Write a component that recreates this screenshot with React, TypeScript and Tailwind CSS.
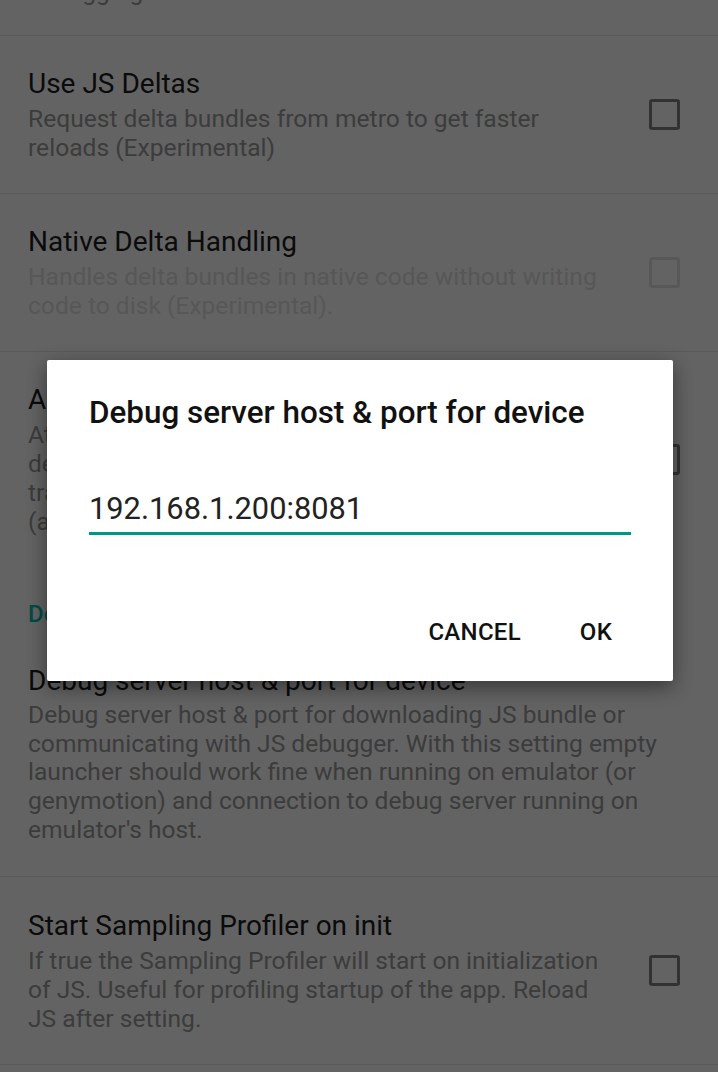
import React from "react";

type PrefProps = {
  title: string;
  summary: React.ReactNode;
  checkbox?: boolean;
  disabled?: boolean;
  divider?: boolean;
  top?: string;
};

const Pref: React.FC<PrefProps> = ({ title, summary, checkbox, disabled, divider = true, top = "pt-[31px]" }) => (
  <div
    className={`flex items-center pl-[28px] ${top} pb-[31px] ${checkbox ? "pr-[38px]" : "pr-[28px]"} ${
      divider ? "border-b border-[#e1e1e1]" : ""
    }`}
  >
    <div className="flex-1 min-w-0">
      <div className="text-[28px] leading-[34px] text-[#1c1c1c]">{title}</div>
      <div
        className={`mt-[3px] text-[24.6px] leading-[29px] ${disabled ? "text-[#d9d9d9]" : "text-[#969696]"}`}
      >
        {summary}
      </div>
    </div>
    {checkbox && (
      <div
        className={`ml-[38px] w-[31px] h-[31px] shrink-0 rounded-[3px] border-[3px] ${
          disabled ? "border-[#dcdcdc]" : "border-[#7d7d7d]"
        }`}
      />
    )}
  </div>
);

export default function App() {
  return (
    <div
      className="relative w-full h-[1072px] overflow-hidden bg-[#f8f8f8]"
      style={{ fontFamily: "Roboto, 'Noto Sans', sans-serif" }}
    >
      {/* tail of the previous preference */}
      <div className="h-[36px] overflow-hidden border-b border-[#e1e1e1] pl-[28px]">
        <p className="-mt-[23px] text-[24.6px] leading-[29px] text-[#969696]">debugging.</p>
      </div>

      <Pref
        title="Use JS Deltas"
        summary="Request delta bundles from metro to get faster reloads (Experimental)"
        checkbox
      />
      <Pref
        title="Native Delta Handling"
        summary="Handles delta bundles in native code without writing code to disk (Experimental)."
        checkbox
        disabled
      />
      <Pref
        title="Animations FPS Summaries"
        summary={
          <>
            At the end of each animation, a Toast with FPS
            <br />
            debug info will be shown. Requires animations
            <br />
            tracking in the native animated module
            <br />
            (applies to the UI thread only).
          </>
        }
        checkbox
        divider={false}
      />

      <div className="pl-[28px] pt-[33px] text-[24px] leading-[28px] font-medium text-[#00bfa5]">Debugging</div>

      <div className="pl-[28px] pr-[28px] pt-[36px] pb-[31px] border-b border-[#e1e1e1]">
        <div className="text-[28px] leading-[34px] text-[#1c1c1c]">Debug server host &amp; port for device</div>
        <div className="mt-[3px] text-[24.6px] leading-[28.7px] text-[#969696]">
          Debug server host &amp; port for downloading JS bundle or communicating with JS debugger. With this
          setting empty launcher should work fine when running on emulator (or genymotion) and connection to debug
          server running on emulator's host.
        </div>
      </div>

      <Pref
        title="Start Sampling Profiler on init"
        summary="If true the Sampling Profiler will start on initialization of JS. Useful for profiling startup of the app. Reload JS after setting."
        checkbox
        top="pt-[32px]"
      />

      {/* scrim */}
      <div className="absolute inset-0 bg-black/60" />

      {/* dialog */}
      <div className="absolute left-[47px] top-[360px] w-[626px] h-[321px] rounded-[2px] bg-white shadow-[0_6px_20px_rgba(0,0,0,0.45)] flex flex-col">
        <div className="pl-[42px] pr-[42px] pt-[35px] text-[31.4px] leading-[36px] font-medium text-[#111111]">
          Debug server host &amp; port for device
        </div>
        <div className="mx-[42px] mt-[60px] pb-[5px] border-b-[3px] border-[#009688]">
          <div className="text-[30.8px] leading-[36px] text-[#222222]">192.168.1.200:8081</div>
        </div>
        <div className="mt-auto mb-[21px] pr-[33px] flex justify-end items-center gap-[15px]">
          <div className="h-[56px] px-[16px] flex items-center text-[24px] font-medium tracking-[0.3px] text-[#111111]">
            CANCEL
          </div>
          <div className="h-[56px] w-[88px] flex items-center justify-center text-[24px] font-medium tracking-[0.3px] text-[#111111]">
            OK
          </div>
        </div>
      </div>
    </div>
  );
}
